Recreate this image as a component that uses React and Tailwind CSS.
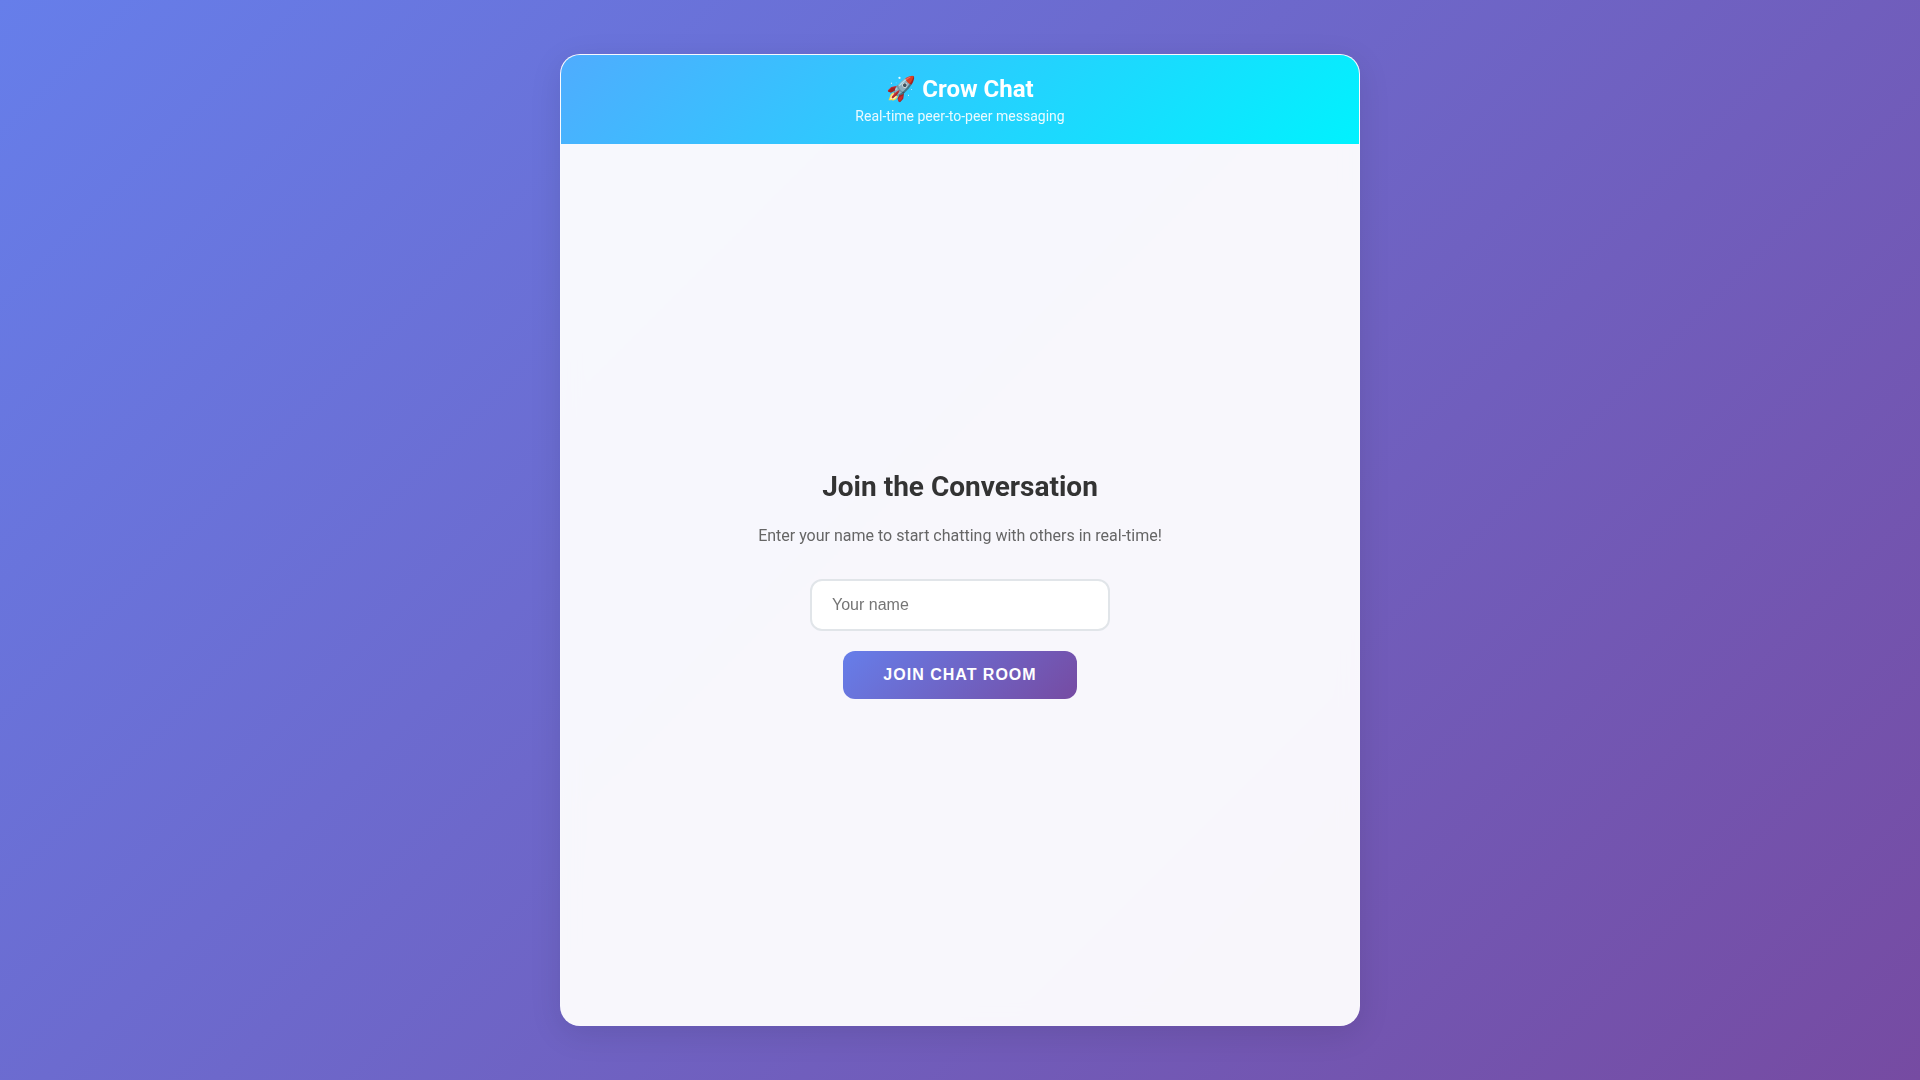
import { useState } from "react";

const Header = () => (
  <header className="bg-linear-[135deg,#4facfe_0%,#00f2fe_100%] p-5 text-center text-white">
    <h1 className="mb-[5px] text-2xl leading-7 font-bold">🚀 Crow Chat</h1>
    <p className="text-sm leading-4 opacity-90">Real-time peer-to-peer messaging</p>
  </header>
);

const JoinForm = () => {
  const [name, setName] = useState("");

  const handleSubmit = (e) => {
    e.preventDefault();
  };

  return (
    <form
      onSubmit={handleSubmit}
      className="flex flex-1 flex-col items-center justify-center p-10 text-center"
    >
      <h2 className="mb-5 text-[28px] leading-[33px] font-bold text-[#333]">Join the Conversation</h2>
      <p className="mb-[30px] text-base leading-[26px] text-[#666]">
        Enter your name to start chatting with others in real-time!
      </p>
      <input
        type="text"
        aria-label="Your name"
        placeholder="Your name"
        maxLength={20}
        value={name}
        onChange={(e) => setName(e.target.value)}
        className="mb-5 w-full max-w-[300px] rounded-xl border-2 border-[#e1e5e9] bg-white px-5 py-[15px] font-['Liberation_Sans',sans-serif] text-base leading-[18px] text-black placeholder-[#757575] outline-none focus:border-[#667eea]"
      />
      <button
        type="submit"
        className="cursor-pointer rounded-xl bg-linear-[135deg,#667eea_0%,#764ba2_100%] px-10 py-[15px] font-['Liberation_Sans',sans-serif] text-base leading-[18px] font-bold tracking-[1px] text-white uppercase"
      >
        Join Chat Room
      </button>
    </form>
  );
};

const App = () => {
  return (
    <div className="flex min-h-screen items-center justify-center bg-linear-[135deg,#667eea_0%,#764ba2_100%] font-[Roboto,sans-serif]">
      <main className="flex h-[90vh] w-full max-w-[800px] flex-col overflow-hidden rounded-[20px] border border-white/20 bg-white/95 shadow-[0_8px_32px_rgba(0,0,0,0.1)] backdrop-blur-[10px]">
        <Header />
        <JoinForm />
      </main>
    </div>
  );
};

export default App;
